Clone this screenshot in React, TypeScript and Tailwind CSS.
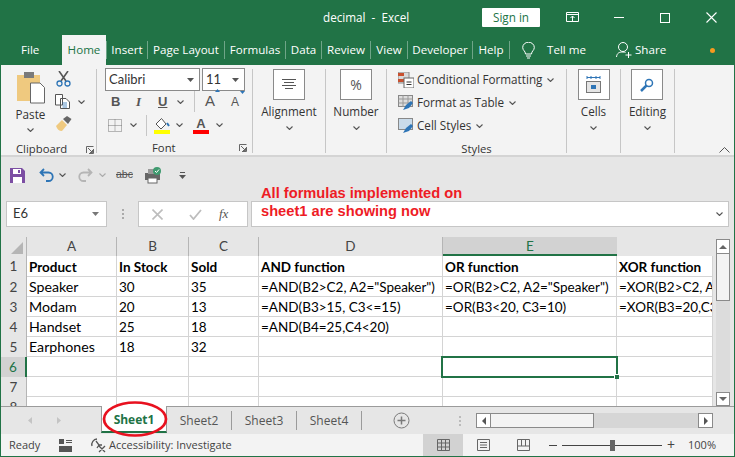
import React from 'react';

const Chev = ({ className = '' }: { className?: string }) => (
  <svg width="7" height="4" viewBox="0 0 7 4" className={className} fill="none" stroke="#555" strokeWidth="1.1">
    <path d="M.5.5 3.5 3.5 6.5.5" />
  </svg>
);

const Sep = () => <div className="w-px h-[84px] bg-[#c6c6c6]" />;

const Launcher = () => (
  <svg width="8" height="8" viewBox="0 0 8 8" fill="none" stroke="#666" strokeWidth="1">
    <path d="M.5 7V.5H7.5M7.5 3V7.5H3M2 2 6.5 6.5M6.5 4V6.5H4" />
  </svg>
);

const BigButton = ({ label, children }: { label: string; children: React.ReactNode }) => (
  <div className="flex flex-col items-center">
    <div className="w-8 h-[31px] bg-white border border-[#8a8a8a] flex items-center justify-center">{children}</div>
    <div className="mt-[2px] text-[11.700px] leading-[18px] text-[#333]">{label}</div>
    <Chev className="mt-[6px]" />
  </div>
);

const TABS = [
  { label: 'Insert', w: 41 },
  { label: 'Page Layout', w: 77 },
  { label: 'Formulas', w: 61 },
  { label: 'Data', w: 36 },
  { label: 'Review', w: 49 },
  { label: 'View', w: 37 },
  { label: 'Developer', w: 65 },
  { label: 'Help', w: 37 },
];

const COLS = [
  { name: 'A', w: 90 },
  { name: 'B', w: 72 },
  { name: 'C', w: 70 },
  { name: 'D', w: 184 },
  { name: 'E', w: 174 },
  { name: '', w: 96 },
];

const ROWS: string[][] = [
  ['Product', 'In Stock', 'Sold', 'AND function', 'OR function', 'XOR function'],
  ['Speaker', '30', '35', '=AND(B2>C2, A2="Speaker")', '=OR(B2>C2, A2="Speaker")', '=XOR(B2>C2, A2="Speaker")'],
  ['Modam', '20', '13', '=AND(B3>15, C3<=15)', '=OR(B3<20, C3=10)', '=XOR(B3=20,C3=13)'],
  ['Handset', '25', '18', '=AND(B4=25,C4<20)', '', ''],
  ['Earphones', '18', '32', '', '', ''],
  ['', '', '', '', '', ''],
  ['', '', '', '', '', ''],
  ['', '', '', '', '', ''],
];

export default function App() {
  return (
    <div className="relative w-[735px] h-[457px] overflow-hidden bg-[#e6e6e6] border-l border-r border-b border-[#217346] font-['Open_Sans',sans-serif]">
      {/* Title bar */}
      <div className="h-[35px] bg-[#217346] flex items-center text-white -mx-px">
        <div className="w-[482px] pl-[323px] text-[11.700px] whitespace-pre pt-px">decimal  -  Excel</div>
        <div className="w-[58px] h-[19px] bg-white text-[#217346] text-[11.700px] leading-[19px] text-center rounded-[1px] mb-[1px]">Sign in</div>
        <svg className="ml-[26px]" width="13" height="11" viewBox="0 0 13 11" fill="none" stroke="white" strokeWidth="1">
          <path d="M.5.5H12.5V9.5H.5ZM.5 2.5H12.5M6.5 9V4M4.500 6 6.500 4 8.500 6" />
        </svg>
        <div className="ml-[35px] w-[10px] h-px bg-white" />
        <div className="ml-[36px] w-[10px] h-[10px] border border-white" />
        <svg className="ml-[36px]" width="11" height="11" viewBox="0 0 11 11" stroke="white" strokeWidth="1.1">
          <path d="M.5.5 10.500 10.500M10.500.5.5 10.500" />
        </svg>
      </div>

      {/* Tabs */}
      <div className="h-[30px] bg-[#217346] flex items-center text-white text-[11.600px] -mx-px">
        <div className="w-[62px] pl-[21px]">File</div>
        <div className="w-[44px] h-[30px] bg-[#f3f3f3] text-[#217346] leading-[30px] text-center">Home</div>
        {TABS.map((t) => (
          <div key={t.label} className="flex items-center text-center">
            <div className="w-px h-[18px] bg-[#6fa588]" />
            <div style={{ width: t.w - 1 }}>{t.label}</div>
          </div>
        ))}
        <div className="w-px h-[18px] bg-[#6fa588]" />
        <svg className="ml-[12px]" width="13" height="17" viewBox="0 0 13 17" fill="none" stroke="white" strokeWidth="1">
          <path d="M3.500 12C3.500 9 .7 8.500.7 5.500a5.800 5.300 0 0 1 11.600 0C12.300 8.500 9.500 9 9.500 12ZM4 14H9M5 16H8" />
        </svg>
        <div className="ml-[12px] w-[46px]">Tell me</div>
        <svg className="ml-[23px]" width="17" height="16" viewBox="0 0 17 16" fill="none" stroke="white" strokeWidth="1">
          <path d="M.5 15C1 11 3 10 7 10c1 0 2 .2 2.500.5M7 9.500a4.500 4.500 0 1 0 0-9 4.500 4.500 0 0 0 0 9ZM12.500 10V16M9.500 13H15.500" />
        </svg>
        <div className="ml-[2px] w-[30px]">Share</div>
        <div className="ml-[45px] w-[5px] h-[5px] rounded-full bg-[#f79a1e]" />
      </div>

      {/* Ribbon */}
      <div className="h-[92px] bg-[#f3f3f3] border-b-2 border-[#d4d4d4] flex pt-[4px] text-[#333] relative">
        {/* Clipboard */}
        <div className="w-[95px] flex flex-col">
          <div className="flex h-[72px] shrink-0">
            <div className="w-[54px] flex flex-col items-center pl-[5px]">
              <svg width="30" height="32" viewBox="0 0 30 32" className="mt-[3px]">
                <rect x="1" y="3" width="23" height="26" fill="#efc97f" />
                <rect x="8" y="0" width="10" height="6" fill="#7a7a7a" />
                <path d="M14.500 11H24l4.500 4.500V31H14.500Z" fill="white" stroke="#666" />
              </svg>
              <div className="text-[11.700px] leading-[16px] mt-[2px]">Paste</div>
              <Chev className="mt-[6px]" />
            </div>
            <div className="flex flex-col gap-[7px] pt-[2px]">
              <svg width="15" height="16" viewBox="0 0 15 16" fill="none" className="ml-[1px]">
                <path d="M3 0 10 10M12 0 5 10" stroke="#555" strokeWidth="1.600" />
                <circle cx="3.500" cy="12.500" r="2.500" stroke="#2e75b6" strokeWidth="1.300" />
                <circle cx="11.500" cy="12.500" r="2.500" stroke="#2e75b6" strokeWidth="1.300" />
              </svg>
              <div className="flex items-center gap-[8px]">
                <svg width="15" height="15" viewBox="0 0 15 15" fill="white" stroke="#555">
                  <path d="M.5.5H7.500V11H.5ZM5.500 4.500H11L14.500 8V14.500H5.500Z" />
                  <path d="M7.500 9H12M7.500 11H12M7.500 13H12" stroke="#2e75b6" strokeWidth=".8" />
                </svg>
                <Chev />
              </div>
              <svg width="16" height="15" viewBox="0 0 16 15" className="ml-[1px]">
                <path d="M0 10 6 4 11 9 6 15C3 15 1 13 0 10Z" fill="#efc97f" />
                <path d="M7 3 11 0 15.500 3 12 8Z" fill="#666" />
              </svg>
            </div>
          </div>
          <div className="flex items-center h-[17px] shrink-0 pl-[15px] text-[11.300px]">
            <span className="w-[70px]">Clipboard</span>
            <Launcher />
          </div>
        </div>
        <Sep />
        {/* Font */}
        <div className="w-[155px] flex flex-col pl-[8px]">
          <div className="flex gap-[2px] shrink-0">
            <div className="w-[95px] h-[23px] mt-[-1px] bg-white border border-[#8a8a8a] flex items-center justify-between pl-[3px] pr-[5px]">
              <span className="font-['Lato',sans-serif] text-[13px]">Calibri</span>
              <svg width="7" height="4"><path d="M0 0H7L3.500 4Z" fill="#555" /></svg>
            </div>
            <div className="w-[43px] h-[23px] mt-[-1px] bg-white border border-[#8a8a8a] flex items-center justify-between pl-[3px] pr-[5px]">
              <span className="font-['Lato',sans-serif] text-[13px]">11</span>
              <svg width="7" height="4"><path d="M0 0H7L3.500 4Z" fill="#555" /></svg>
            </div>
          </div>
          <div className="flex items-center h-[21px] shrink-0 pl-[6px] text-[13px] text-[#555] font-['Liberation_Sans',sans-serif]">
            <b className="w-[25px]">B</b>
            <i className="w-[22px] font-['Liberation_Serif',serif] font-bold">I</i>
            <span className="w-[19px] underline font-bold">U</span>
            <Chev />
            <div className="w-px h-[21px] bg-[#c6c6c6] ml-[10px]" />
            <span className="ml-[10px] text-[15px] relative">A<svg className="absolute -top-[1px] -right-[5px]" width="5" height="3"><path d="M0 3 2.500 0 5 3Z" fill="#2e75b6" /></svg></span>
            <span className="ml-[16px] text-[12px] relative">A<svg className="absolute -top-[2px] -right-[6px]" width="5" height="3"><path d="M0 0H5L2.500 3Z" fill="#2e75b6" /></svg></span>
          </div>
          <div className="flex items-center h-[22px] shrink-0 mt-[2px] pl-[3px]">
            <svg width="14" height="13" viewBox="0 0 14 13" fill="none" stroke="#777" strokeDasharray="1 1">
              <path d="M.5.5H13.500V12.500H.5ZM7 .5V12.500M.5 6.500H13.500" />
            </svg>
            <Chev className="ml-[8px]" />
            <div className="w-px h-[21px] bg-[#c6c6c6] ml-[9px]" />
            <div className="ml-[7px] flex flex-col items-center">
              <svg width="16" height="13" viewBox="0 0 16 13" fill="white" stroke="#555">
                <path d="M2 7 7.500 1.500 12 7 7 12Z" />
                <path d="M13 6 15 9" stroke="#2e75b6" strokeWidth="2" />
              </svg>
              <div className="w-[16px] h-[4px] bg-[#ffff00]" />
            </div>
            <Chev className="ml-[6px]" />
            <div className="ml-[10px] flex flex-col items-center w-[16px]">
              <span className="font-['Liberation_Sans',sans-serif] font-bold text-[13px] leading-[13px] text-[#555]">A</span>
              <div className="w-[16px] h-[4px] bg-[#ff0000]" />
            </div>
            <Chev className="ml-[7px]" />
          </div>
          <div className="flex items-center h-[16px] shrink-0 mt-[4px] text-[11.300px]">
            <span className="ml-[47px] w-[87px]">Font</span>
            <Launcher />
          </div>
        </div>
        <Sep />
        {/* Alignment */}
        <div className="w-[72px] flex flex-col items-center">
          <BigButton label="Alignment">
            <svg width="14" height="11" viewBox="0 0 14 11" stroke="#555"><path d="M0 .5H14M2 3.500H12M0 6.500H14M3 9.500H11" /></svg>
          </BigButton>
        </div>
        <Sep />
        {/* Number */}
        <div className="w-[60px] flex flex-col items-center">
          <BigButton label="Number">
            <span className="text-[14px] text-[#555]">%</span>
          </BigButton>
        </div>
        <Sep />
        {/* Styles */}
        <div className="w-[179px] flex flex-col pl-[11px] text-[11.700px]">
          <div className="flex items-center gap-[3px] h-[22px] shrink-0">
            <svg width="16" height="16" viewBox="0 0 16 16">
              <rect x="0" y="0" width="11" height="11" fill="#d9d9d9" stroke="#888" />
              <rect x="0" y="1" width="6" height="3" fill="#c8502f" />
              <rect x="0" y="7" width="6" height="3" fill="#c8502f" />
              <rect x="6" y="6" width="10" height="10" fill="white" stroke="#666" />
              <path d="M8.500 10H13.500M8.500 12.500H13.500" stroke="#333" />
            </svg>
            <span>Conditional Formatting</span>
            <Chev className="ml-[2px]" />
          </div>
          <div className="flex items-center gap-[3px] h-[23px] shrink-0">
            <svg width="16" height="16" viewBox="0 0 16 16">
              <rect x=".5" y=".5" width="14" height="11" fill="#ddd" stroke="#888" />
              <path d="M.5 4H14.500M.5 8H14.500M5 .5V12M10 .5V12" stroke="#999" />
              <path d="M5 15 8 10 13 6 15 8 11 13Z" fill="#2e75b6" />
            </svg>
            <span>Format as Table</span>
            <Chev className="ml-[2px]" />
          </div>
          <div className="flex items-center gap-[3px] h-[23px] shrink-0">
            <svg width="16" height="16" viewBox="0 0 16 16">
              <rect x=".5" y=".5" width="14" height="11" fill="#c9dbea" stroke="#888" />
              <path d="M5 15 8 10 13 6 15 8 11 13Z" fill="#2e75b6" />
            </svg>
            <span>Cell Styles</span>
            <Chev className="ml-[2px]" />
          </div>
          <div className="h-[16px] shrink-0 mt-[4px] text-[11.300px] text-center pr-[11px]">Styles</div>
        </div>
        <Sep />
        {/* Cells */}
        <div className="w-[53px] flex flex-col items-center">
          <BigButton label="Cells">
            <svg width="15" height="17" viewBox="0 0 15 17" fill="none">
              <path d="M1 1.500H14M1 0V3M14 0V3M5 0V3M10 0V3" stroke="#2e75b6" />
              <rect x=".5" y="5.500" width="14" height="11" fill="#e5e5e5" stroke="#777" />
              <rect x="5" y="9" width="5" height="4" fill="#2e75b6" />
            </svg>
          </BigButton>
        </div>
        <Sep />
        {/* Editing */}
        <div className="w-[53px] flex flex-col items-center">
          <BigButton label="Editing">
            <svg width="14" height="14" viewBox="0 0 14 14" fill="none" stroke="#2e75b6">
              <circle cx="9" cy="5" r="3.500" strokeWidth="1.500" />
              <path d="M6.500 7.500 1 13" strokeWidth="2.500" />
            </svg>
          </BigButton>
        </div>
        <Sep />
        <svg className="absolute right-[4px] bottom-[2px]" width="11" height="6" viewBox="0 0 11 6" fill="none" stroke="#555">
          <path d="M.5 5.500 5.500.5 10.500 5.500" />
        </svg>
      </div>

      {/* Quick access toolbar */}
      <div className="h-[36px] flex items-center pl-[9px]">
        <svg width="15" height="15" viewBox="0 0 15 15">
          <path d="M0 0H12L15 3V15H0Z" fill="#7c4ea3" />
          <rect x="3" y="1" width="8" height="5" fill="white" />
          <rect x="3" y="9" width="9" height="6" fill="white" />
          <rect x="8" y="2" width="2" height="3" fill="#7c4ea3" />
        </svg>
        <svg className="ml-[14px]" width="15" height="14" viewBox="0 0 15 14" fill="none" stroke="#2e75b6" strokeWidth="1.800">
          <path d="M5 1 1.500 4.500 5 8M1.500 4.500H9.500a4 4 0 0 1 0 8.500H7" />
        </svg>
        <Chev className="ml-[5px]" />
        <svg className="ml-[12px]" width="15" height="14" viewBox="0 0 15 14" fill="none" stroke="#b5b5b5" strokeWidth="1.800">
          <path d="M10 1 13.500 4.500 10 8M13.500 4.500H5.500a4 4 0 0 0 0 8.500H8" />
        </svg>
        <Chev className="ml-[6px] opacity-40" />
        <span className="ml-[10px] text-[10.500px] text-[#555] line-through font-['Liberation_Sans',sans-serif]">abc</span>
        <svg className="ml-[12px]" width="17" height="17" viewBox="0 0 17 17">
          <rect x="0" y="6" width="15" height="7" fill="#666" />
          <rect x="3" y="2" width="9" height="5" fill="#999" />
          <rect x="3" y="11" width="9" height="5" fill="white" stroke="#666" />
          <circle cx="12" cy="4" r="4" fill="#3f9a6f" />
          <path d="M10 4 11.500 5.500 14 2.500" stroke="white" fill="none" />
        </svg>
        <svg className="ml-[17px]" width="7" height="7" viewBox="0 0 7 7">
          <path d="M1 .5H6" stroke="#555" />
          <path d="M0 3H7L3.500 7Z" fill="#555" />
        </svg>
      </div>

      {/* Formula bar */}
      <div className="h-[26px] mt-[8px] flex pl-[5px]">
        <div className="w-[101px] bg-white border border-[#c6c6c6] flex items-center justify-between pl-[6px] pr-[7px] font-['Lato',sans-serif] text-[13px] text-[#333]">
          E6
          <svg width="7" height="4"><path d="M0 0H7L3.500 4Z" fill="#777" /></svg>
        </div>
        <div className="w-[31px] flex flex-col items-center justify-center gap-[2px]">
          <div className="w-[2px] h-[2px] bg-[#aaa]" />
          <div className="w-[2px] h-[2px] bg-[#aaa]" />
          <div className="w-[2px] h-[2px] bg-[#aaa]" />
        </div>
        <div className="w-[110px] bg-white border border-[#c6c6c6] flex items-center pl-[13px]">
          <svg width="11" height="11" viewBox="0 0 11 11" stroke="#bdbdbd" strokeWidth="1.600"><path d="M.5.5 10.500 10.500M10.500.5.5 10.500" /></svg>
          <svg className="ml-[26px]" width="13" height="11" viewBox="0 0 13 11" fill="none" stroke="#bdbdbd" strokeWidth="1.800"><path d="M1 6 4.500 10 12 1" /></svg>
          <span className="ml-[17px] font-['Liberation_Serif',serif] italic text-[13px] text-[#555]">fx</span>
        </div>
        <div className="w-[3px]" />
        <div className="w-[478px] bg-white border border-[#c6c6c6] flex items-center justify-end pr-[5px]">
          <Chev />
        </div>
      </div>

      {/* Sheet */}
      <div className="mt-[10px] flex h-[169px]">
        <div className="w-[712px] overflow-hidden font-['Lato',sans-serif] text-[13.500px] text-black relative">
          <div className="flex h-[19px] text-[#444]">
            <div className="w-[26px] bg-[#e6e6e6] border-r border-[#b5b5b5] flex items-end justify-end pr-[3px] pb-[2px]">
              <svg width="12" height="12"><path d="M12 0V12H0Z" fill="#b5b5b5" /></svg>
            </div>
            {COLS.map((c) => (
              <div
                key={c.name}
                style={{ width: c.w }}
                className={
                  c.name === 'E'
                    ? 'bg-[#d2d2d2] border-b-2 border-[#217346] text-center leading-[19px] text-[#217346]'
                    : c.name === ''
                      ? ''
                      : 'border-r border-[#b5b5b5] text-center leading-[19px]'
                }
              >
                {c.name}
              </div>
            ))}
          </div>
          {ROWS.map((cells, r) => (
            <div key={r} className={r === 0 ? 'flex h-[21px]' : 'flex h-[20px]'}>
              <div
                className={
                  r === 5
                    ? 'w-[26px] bg-[#d2d2d2] border-r-2 border-[#217346] text-center leading-[20px] text-[#217346]'
                    : 'w-[26px] border-r border-[#b5b5b5] text-center leading-[20px] text-[#444]'
                }
              >
                {r + 1}
              </div>
              {cells.map((v, c) => (
                <div
                  key={c}
                  style={{ width: COLS[c].w }}
                  className={
                    (r === 0 ? 'font-bold leading-[22px] ' : 'leading-[20px] ') +
                    (r > 0 && c === 0 ? 'text-[14.200px] ' : '') +
                    'bg-white border-r border-b border-[#d4d4d4] pl-[2px] whitespace-nowrap overflow-hidden'
                  }
                >
                  {v}
                </div>
              ))}
            </div>
          ))}
          {/* selected cell E6 */}
          <div className="absolute left-[440px] top-[119px] w-[177px] h-[22px] border-2 border-[#217346]">
            <div className="absolute -right-[3px] -bottom-[3px] w-[5px] h-[5px] bg-[#217346] border-l border-t border-white" />
          </div>
        </div>
        {/* vertical scrollbar */}
        <div className="w-[14px] ml-[3px] mt-[2px] flex flex-col bg-[#dcdcdc]">
          <div className="h-[15px] bg-white border border-[#8a8a8a] flex items-center justify-center">
            <svg width="8" height="4"><path d="M0 4H8L4 0Z" fill="#666" /></svg>
          </div>
          <div className="h-[47px] bg-[#f3f3f3] border border-[#8a8a8a] border-t-0" />
          <div className="flex-1" />
          <div className="h-[14px] bg-white border border-[#8a8a8a] flex items-center justify-center">
            <svg width="8" height="4"><path d="M0 0H8L4 4Z" fill="#666" /></svg>
          </div>
        </div>
      </div>

      {/* Sheet tabs */}
      <div className="h-[28px] border-t border-[#9b9b9b] flex items-start text-[12px] text-[#555]">
        <div className="w-[100px] h-[27px] flex items-center pl-[27px] gap-[25px]">
          <svg width="4" height="7"><path d="M4 0V7L0 3.500Z" fill="#c4c4c4" /></svg>
          <svg width="4" height="7"><path d="M0 0V7L4 3.500Z" fill="#c4c4c4" /></svg>
        </div>
        <div className="w-[66px] h-[27px] -mt-px bg-white border-l border-r border-[#9b9b9b] border-b-2 border-b-[#217346] text-center leading-[28px] font-bold text-[#217346]">
          Sheet1
        </div>
        {['Sheet2', 'Sheet3', 'Sheet4'].map((s) => (
          <div key={s} className="w-[65px] h-[27px] flex items-center">
            <div className="flex-1 text-center">{s}</div>
            <div className="w-px h-[19px] bg-[#9b9b9b]" />
          </div>
        ))}
        <div className="w-[48px] h-[27px] flex items-center justify-end">
          <svg width="17" height="17" viewBox="0 0 17 17" fill="none" stroke="#7a7a7a">
            <circle cx="8.500" cy="8.500" r="7.500" />
            <path d="M8.500 4.500V12.500M4.500 8.500H12.500" strokeWidth="1.500" />
          </svg>
        </div>
        <div className="ml-[49px] h-[27px] flex flex-col justify-center gap-[2px]">
          <div className="w-[2px] h-[2px] bg-[#bbb]" />
          <div className="w-[2px] h-[2px] bg-[#bbb]" />
          <div className="w-[2px] h-[2px] bg-[#bbb]" />
        </div>
        <div className="ml-[15px] mt-[6px] w-[237px] h-[15px] flex bg-[#d6d6d6]">
          <div className="w-[15px] bg-white border border-[#8a8a8a] flex items-center justify-center">
            <svg width="4" height="8"><path d="M4 0V8L0 4Z" fill="#555" /></svg>
          </div>
          <div className="w-[103px] bg-[#f3f3f3] border border-l-0 border-[#8a8a8a]" />
          <div className="flex-1" />
          <div className="w-[15px] bg-white border border-[#8a8a8a] flex items-center justify-center">
            <svg width="4" height="8"><path d="M0 0V8L4 4Z" fill="#555" /></svg>
          </div>
        </div>
      </div>

      {/* Status bar */}
      <div className="h-[22px] bg-[#f3f3f3] flex items-center text-[11px] text-[#444]">
        <span className="ml-[8px] w-[50px]">Ready</span>
        <svg width="13" height="13" viewBox="0 0 13 13" fill="#555"><rect x="0" y="0" width="5" height="5" /><path d="M7 1H13V2H7ZM7 3H13V4H7ZM0 7H13V13H0Z" /></svg>
        <svg className="ml-[18px]" width="16" height="16" viewBox="0 0 16 16" fill="none" stroke="#555" strokeWidth="1.300">
          <path d="M2 9A5.500 5.500 0 0 1 7 2M6 4 9 8 7 11M9 8H12M9 9 15 15M15 9 9 15" />
        </svg>
        <span className="ml-[3px] w-[112px] whitespace-nowrap">Accessibility: Investigate</span>
        <div className="ml-[202px] w-[40px] h-[22px] bg-[#d2d2d2] flex items-center justify-center">
          <svg width="13" height="12" viewBox="0 0 13 12" fill="none" stroke="#666"><path d="M.5.500H12.500V11.500H.5ZM.5 4H12.500M.5 8H12.500M4.500.5V11.500M8.500.5V11.500" /></svg>
        </div>
        <div className="w-[40px] flex justify-center">
          <svg width="13" height="12" viewBox="0 0 13 12" fill="none" stroke="#666"><path d="M.5.500H12.500V11.500H.5ZM3 3.500H10M3 6H10M3 8.500H10" /></svg>
        </div>
        <div className="w-[40px] flex justify-center">
          <svg width="13" height="12" viewBox="0 0 13 12" fill="none" stroke="#666"><path d="M.5.500H12.500V11.500H.5ZM.5 7H12.500M4.500.5V7M8.500.5V7" /></svg>
        </div>
        <div className="ml-[6px] w-[8px] h-px bg-[#444]" />
        <div className="ml-[5px] w-[100px] h-px bg-[#444] flex items-center justify-center">
          <div className="w-[5px] h-[11px] bg-[#666]" />
        </div>
        <span className="ml-[5px] text-[14px] leading-none">+</span>
        <span className="ml-[13px]">100%</span>
      </div>

      {/* Annotation typed over the sheet */}
      <div className="absolute left-[260px] top-[184px] font-['Liberation_Sans',sans-serif] font-bold text-[14.670px] leading-[18px] text-[#ee1c25]">
        <div>All formulas implemented on</div>
        <div>sheet1 are showing now</div>
      </div>

      {/* Red hand-drawn circle around the active sheet tab */}
      <svg className="absolute left-[100px] top-[398px]" width="68" height="42" viewBox="0 0 68 42" fill="none">
        <ellipse cx="34" cy="21" rx="31" ry="16.500" stroke="#e8111f" strokeWidth="2.700" />
      </svg>
    </div>
  );
}
